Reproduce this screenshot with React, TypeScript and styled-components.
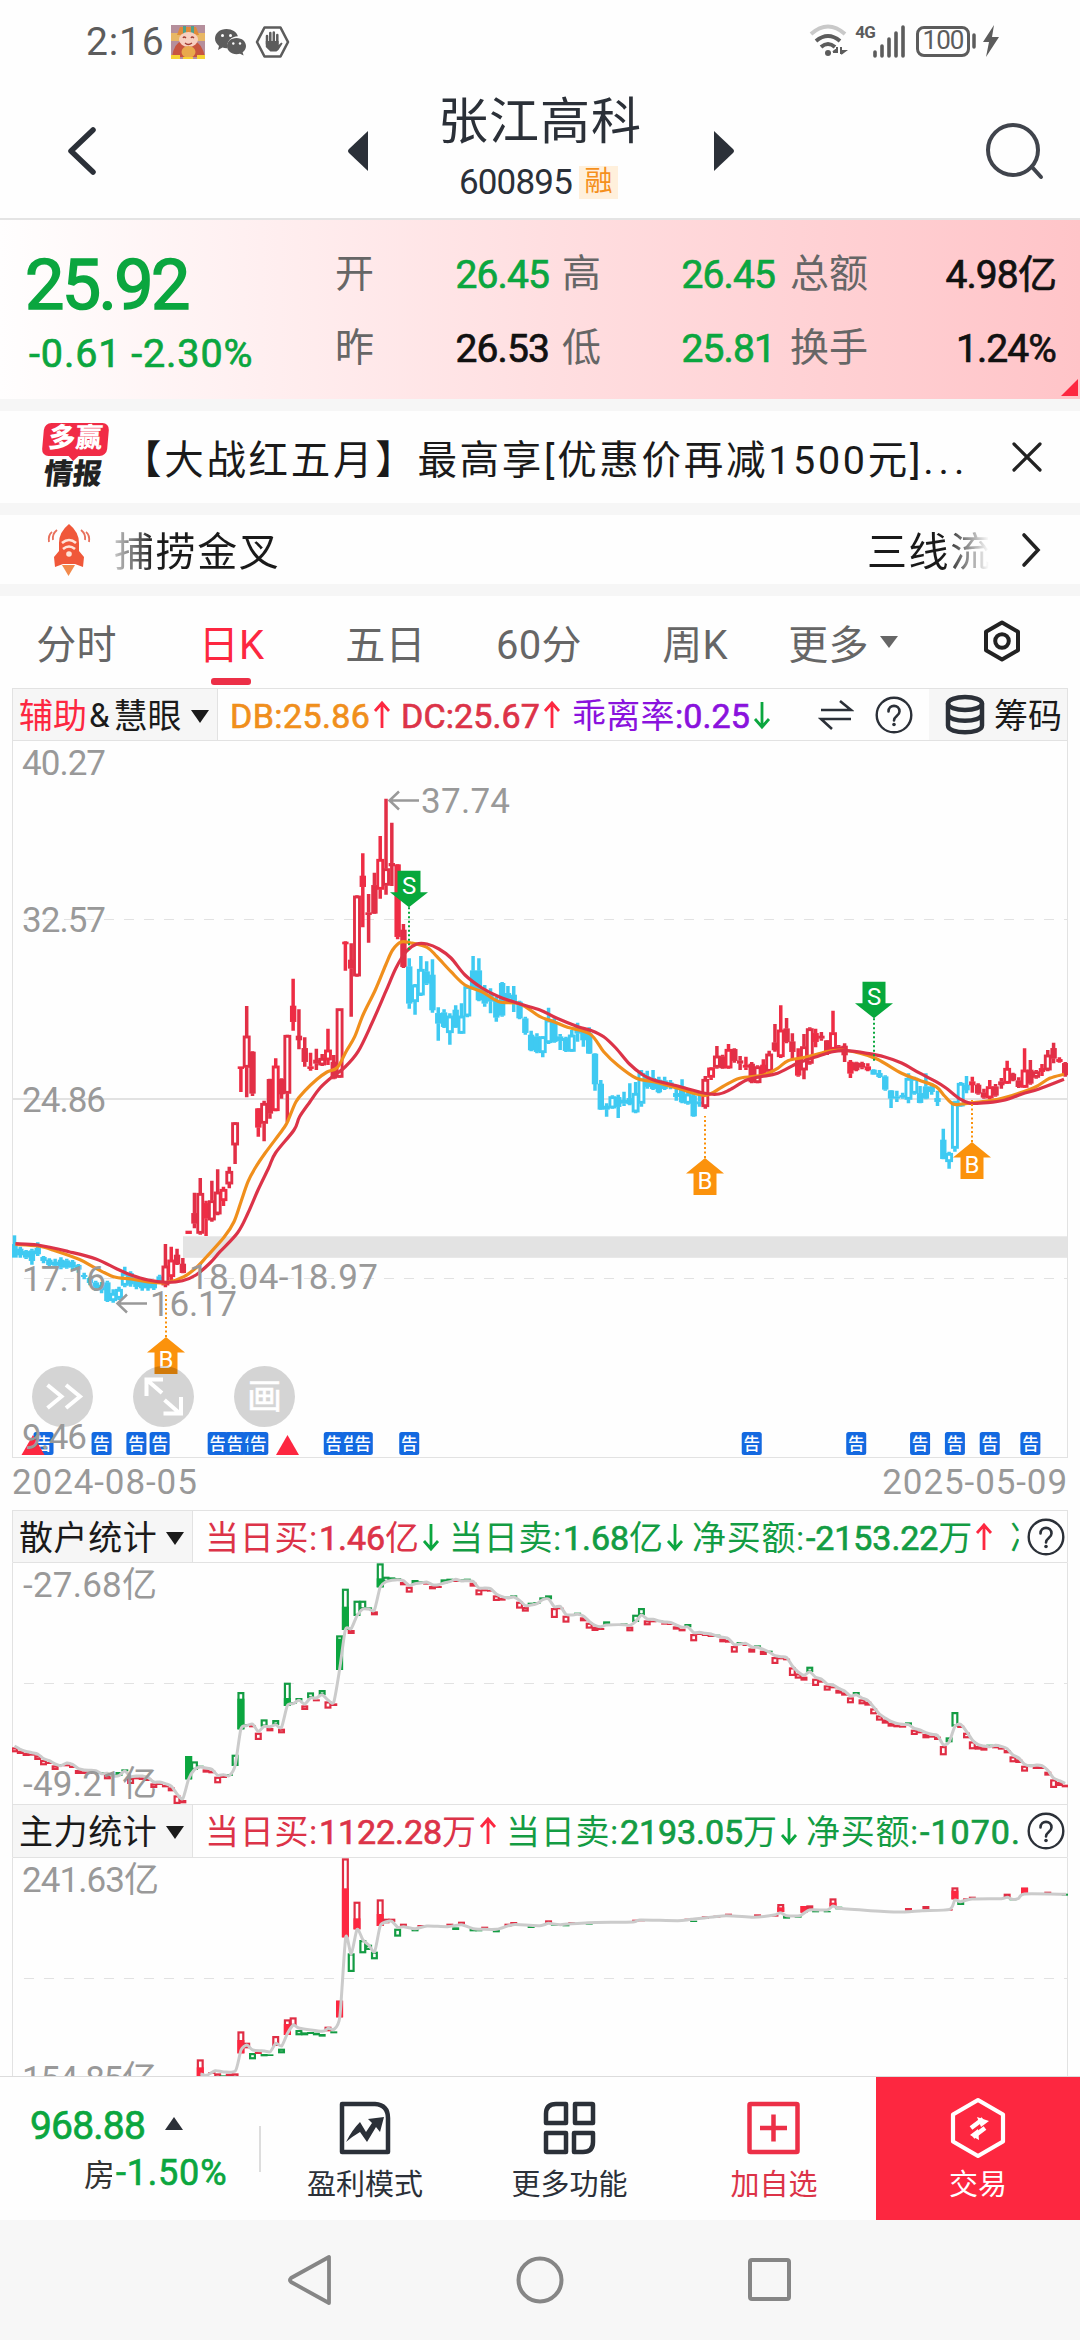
import React from 'react';
import styled, { createGlobalStyle } from 'styled-components';

const RED = '#fd2740';
const DEEP = '#dc3348';
const GREEN = '#0ba63f';
const BLUE = '#3fcaf2';
const ORANGE = '#f08f1c';
const INK = '#2b3038';
const GREY = '#666';
const LABEL = '#999';
const LINE = '#e2e2e2';

const FONT = "Roboto, 'Noto Sans CJK SC', sans-serif";

const Global = createGlobalStyle`
  * { box-sizing: border-box; }
  body { margin: 0; background: #fff; font-family: ${FONT}; color: #1a1a1a; }
`;

const Screen = styled.div`
  width: 1080px;
  height: 2340px;
  display: flex;
  flex-direction: column;
  background: #fefefe;
  overflow: hidden;
`;

interface TxtProps { $size: number; $color?: string; $ls?: number; $bold?: boolean; $ml?: number; $ws?: number; $pt?: number }
const Txt = styled.span<TxtProps>`
  font-size: ${(p) => p.$size}px;
  line-height: 1.2;
  color: ${(p) => p.$color ?? 'inherit'};
  letter-spacing: ${(p) => p.$ls ?? 0}px;
  word-spacing: ${(p) => p.$ws ?? 0}px;
  -webkit-text-stroke: ${(p) => (p.$bold ? `${p.$size > 60 ? 1.6 : 0.7}px currentColor` : '0')};
  margin-left: ${(p) => p.$ml ?? 0}px;
  padding-top: ${(p) => p.$pt ?? 0}px;
  white-space: pre;
`;

/* ---------- status bar ---------- */

const StatusBar = styled.div`
  height: 82px;
  display: flex;
  align-items: center;
  justify-content: space-between;
  padding: 0 78px 0 86px;
  color: #5c5c5c;
`;
const StatusGroup = styled.div`
  display: flex;
  align-items: center;
`;

function LeftStatus() {
  return (
    <StatusGroup>
      <Txt $size={39} $ls={0.8} $pt={2}>2:16</Txt>
      <svg width="126" height="40" viewBox="168 20 126 40" style={{ display: 'block', marginLeft: 3 }}>
        <rect x="172" y="24" width="34" height="34" fill="#b58f9c" />
        <path d="M172 32h34v8h-34z" fill="#e8b765" />
        <path d="M178 34l3-8h16l3 8z" fill="#e08a3a" />
        <path d="M184 25h3v8h-3zM192 25h3v8h-3z" fill="#4fa08c" />
        <path d="M173 56q2-14 10-16h12q8 2 11 16z" fill="#c8543f" />
        <ellipse cx="189.500" cy="38.500" rx="9.500" ry="7.500" fill="#f7cfc0" />
        <path d="M184 37q1-2 3 0M192 37q1-2 3 0M186 42q3 3 7 0" stroke="#a33c33" strokeWidth="1.300" fill="none" />
        <ellipse cx="189.500" cy="51" rx="7" ry="6" fill="#e9a94c" />
        <path d="M172 54h9v4h-9zM198 54h8v4h-8zM184 56h10v2h-10z" fill="#f6d335" />
        <path d="M227.500 28c-6.600 0-11.500 4.200-11.500 9.600 0 3 1.500 5.500 4 7.300l-1 4 4.500-2.300c1.300.4 2.600.6 4 .6h1c-1.600-7 4-11.800 10.400-12-1.200-4.300-5.800-7.200-11.400-7.200z" fill="#5c5c5c" />
        <path d="M237.500 37c-5.500 0-9.500 3.600-9.500 8s4 8.200 9.500 8.200c1.200 0 2.400-.2 3.500-.5l3.600 1.800-1-3.200c2.200-1.500 3.400-3.700 3.400-6.300 0-4.400-4-8-9.500-8z" fill="#5c5c5c" />
        <g fill="#fff"><circle cx="223.500" cy="34.500" r="1.500" /><circle cx="231.500" cy="34.500" r="1.500" /><circle cx="234.300" cy="42.500" r="1.200" /><circle cx="241" cy="42.500" r="1.200" /></g>
        <path d="M265.500 26.500h16l7.500 14.500-7.500 14.500h-16L258 41z" fill="none" stroke="#5c5c5c" strokeWidth="2.600" strokeLinejoin="round" />
        <path d="M268 43V35M271.300 42V32M274.800 42V31.500M278.300 43V34" stroke="#5c5c5c" strokeWidth="2.500" strokeLinecap="round" />
        <path d="M266.800 40h12.800v4l2.700-2.600 1.300 1-4.200 6.600-2 1.500h-6l-4.600-4.500z" fill="#5c5c5c" />
      </svg>
    </StatusGroup>
  );
}

const Battery = styled.div`
  width: 54px;
  height: 31px;
  margin-left: 10px;
  border: 3px solid #5c5c5c;
  border-radius: 8px;
  display: flex;
  align-items: center;
  justify-content: center;
`;
const Network = styled.div`
  align-self: flex-start;
  margin: 0 0 0 6px;
  font: 700 17px/18px ${FONT};
  letter-spacing: -0.8px;
`;

function RightStatus() {
  return (
    <StatusGroup>
      <svg width="40" height="34" viewBox="0 0 40 34">
        <path d="M2 10q17-15 34 0" fill="none" stroke="#c9c9c9" strokeWidth="4" />
        <path d="M7 17q12-10 24 0M12 23q7-6 14 0" fill="none" stroke="#5c5c5c" strokeWidth="4" />
        <circle cx="19" cy="29" r="3" fill="#5c5c5c" />
        <path d="M24 28h4v-5M24 28l4-3M32 23v7M32 30l4-3h-4" stroke="#5c5c5c" strokeWidth="2" fill="none" />
      </svg>
      <Network>4G</Network>
      <svg width="34" height="34" viewBox="0 0 34 34" style={{ marginLeft: -3 }}>
        <path d="M3 32v-4M10 32V22M17 32V15M24 32V9M31 32V3" stroke="#5c5c5c" strokeWidth="3.600" strokeLinecap="round" />
      </svg>
      <Battery><Txt $size={26} $ls={-1}>100</Txt></Battery>
      <svg width="32" height="36" viewBox="0 0 32 36">
        <path d="M4 12v12" stroke="#5c5c5c" strokeWidth="3.500" strokeLinecap="round" />
        <path d="M24 2L13 19h6l-3 15 13-20h-7z" fill="#5c5c5c" />
      </svg>
    </StatusGroup>
  );
}

/* ---------- title ---------- */

const TitleBar = styled.div`
  height: 138px;
  border-bottom: 2px solid #e4e4e4;
  display: grid;
  grid-template-columns: 340px 1fr 340px;
  align-items: center;
`;
const TitleSide = styled.div<{ $right?: boolean }>`
  display: flex;
  align-items: center;
  justify-content: space-between;
  padding: ${(p) => (p.$right ? '2px 34px 0 0' : '2px 0 0 60px')};
  margin: ${(p) => (p.$right ? '0 0 0 -29px' : '0 -31px 0 0')};
`;
const TitleMid = styled.div`
  display: flex;
  flex-direction: column;
  align-items: center;
  color: ${INK};
  margin-top: -5px;
`;
const CodeRow = styled.div`
  display: flex;
  align-items: center;
  gap: 7px;
  margin-top: 10px;
  padding-right: 3px;
`;
const Margin = styled.span`
  width: 39px;
  height: 33px;
  background: #fff0dc;
  color: #f5901c;
  font-size: 28px;
  line-height: 32px;
  text-align: center;
`;

function Title() {
  return (
    <TitleBar>
      <TitleSide>
        <svg width="40" height="56" viewBox="0 0 40 56"><path d="M33 7L11 28l22 21" fill="none" stroke={INK} strokeWidth="5.500" strokeLinecap="round" strokeLinejoin="round" /></svg>
        <svg width="24" height="44" viewBox="0 0 24 44"><path d="M21 2v40L2 24q-2-2 0-4z" fill={INK} /></svg>
      </TitleSide>
      <TitleMid>
        <Txt $size={50} $ls={1}>张江高科</Txt>
        <CodeRow>
          <Txt $size={35} $ls={-0.8}>600895</Txt>
          <Margin>融</Margin>
        </CodeRow>
      </TitleMid>
      <TitleSide $right>
        <svg width="24" height="44" viewBox="0 0 24 44"><path d="M3 2v40l19-18q2-2 0-4z" fill={INK} /></svg>
        <svg width="62" height="62" viewBox="0 0 62 62"><circle cx="29" cy="30" r="25" fill="none" stroke="#40444c" strokeWidth="4" /><path d="M48 47l9 10" stroke="#40444c" strokeWidth="4" strokeLinecap="round" /></svg>
      </TitleSide>
    </TitleBar>
  );
}

/* ---------- quote ---------- */

const Quote = styled.section`
  position: relative;
  height: 179px;
  padding: 23px 24px 0 24px;
  display: flex;
  background: linear-gradient(90deg, #fffefe 0%, #ffdfe1 50%, #ffc4c8 100%);
  &::after {
    content: '';
    position: absolute;
    right: 2px;
    bottom: 3px;
    border-left: 17px solid transparent;
    border-bottom: 17px solid ${RED};
  }
`;
const PriceCol = styled.div`
  width: 311px;
  display: flex;
  flex-direction: column;
  gap: 3px;
  color: ${GREEN};
`;
const Grid = styled.div`
  flex: 1;
  display: grid;
  grid-template-columns: 39px 175px 13px 39px 174px 13px 80px 1fr;
  grid-template-rows: 74px 74px;
  margin-top: -5px;
  align-items: center;
`;
const Cell = styled.div<{ $color?: string; $start: number }>`
  grid-column-start: ${(p) => p.$start};
  text-align: right;
  white-space: nowrap;
  font-size: 39px;
  line-height: 58px;
  margin-top: ${(p) => (p.$color ? 0 : -2)}px;
  -webkit-text-stroke: ${(p) => (p.$color ? '0.7px currentColor' : '0')};
  letter-spacing: ${(p) => (p.$color ? -0.9 : 0)}px;
  color: ${(p) => p.$color ?? GREY};
`;

function QuotePanel() {
  return (
    <Quote>
      <PriceCol>
        <Txt $size={70} $bold $ls={-2.6} $ml={1}>25.92</Txt>
        <Txt $size={39.5} $bold $ls={0.9} $ws={-1} $ml={5}>-0.61 -2.30%</Txt>
      </PriceCol>
      <Grid>
        <Cell $start={1}>开</Cell><Cell $start={2} $color={GREEN}>26.45</Cell>
        <Cell $start={4}>高</Cell><Cell $start={5} $color={GREEN}>26.45</Cell>
        <Cell $start={7}>总额</Cell><Cell $start={8} $color="#111">4.98亿</Cell>
        <Cell $start={1}>昨</Cell><Cell $start={2} $color="#111">26.53</Cell>
        <Cell $start={4}>低</Cell><Cell $start={5} $color={GREEN}>25.81</Cell>
        <Cell $start={7}>换手</Cell><Cell $start={8} $color="#111">1.24%</Cell>
      </Grid>
    </Quote>
  );
}

/* ---------- notices ---------- */

const Gap = styled.div`
  height: 12px;
  flex: none;
  background: #f6f6f6;
`;
const Notice = styled.div<{ $h: number }>`
  height: ${(p) => p.$h}px;
  display: flex;
  align-items: center;
  padding: 0 36px 0 40px;
`;
const Logo = styled.div`
  width: 70px;
  margin-top: -2px;
  display: flex;
  flex-direction: column;
  align-items: center;
`;
const Bubble = styled.div`
  position: relative;
  width: 65px;
  height: 33px;
  border-radius: 7px;
  background: #f12b46;
  color: #fff;
  font: 900 27px/31px ${FONT};
  text-align: center;
  transform: skewX(-5deg);
  &::after {
    content: '';
    position: absolute;
    left: 26px;
    top: 32px;
    border: 6px solid transparent;
    border-top-color: #f12b46;
    border-bottom: 0;
  }
`;
const LogoText = styled.div`
  margin: 3px 4px 0 0;
  font: 900 29px/30px ${FONT};
  color: #222;
  transform: skewX(-7deg);
`;
const Clip = styled.div<{ $w: number; $fade?: string }>`
  width: ${(p) => p.$w}px;
  overflow: hidden;
  white-space: nowrap;
  ${(p) => p.$fade && `-webkit-mask-image: ${p.$fade}; mask-image: ${p.$fade}; padding-top: 6px;`}
`;
const Spacer = styled.div`flex: 1;`;

function Notices() {
  return (
    <>
      <Gap />
      <Notice $h={92}>
        <Logo><Bubble>多赢</Bubble><LogoText>情报</LogoText></Logo>
        <Txt $size={39.5} $ls={2.7} $ml={12} $pt={8}>【大战红五月】最高享[优惠价再减1500元]<Txt as="span" $size={39.5} $ls={5}>...</Txt></Txt>
        <Spacer />
        <svg width="34" height="34" viewBox="0 0 34 34"><path d="M4 4l26 26M30 4L4 30" stroke="#222" strokeWidth="3.200" strokeLinecap="round" /></svg>
      </Notice>
      <Gap />
      <Notice $h={69}>
        <svg width="56" height="56" viewBox="0 0 56 56">
          <path d="M12 10q-4 3-3 10M17 8q-5 4-4 10M46 10q4 3 3 10M41 8q5 4 4 10" fill="none" stroke="#e8705c" strokeWidth="1.800" />
          <path d="M29 2q10 8 10 19v8l5 6-1 10-8-3H23l-8 3-1-10 5-6v-8Q19 10 29 2z" fill="#f0583a" />
          <path d="M22 43h13l-6.500 11z" fill="#f28a4c" />
          <path d="M22 21q7-6 14 0M23 27q6-5 12 0" fill="none" stroke="#ffe3d8" strokeWidth="2.600" />
          <circle cx="29" cy="32" r="2.800" fill="#ffe3d8" />
        </svg>
        <Clip $w={186} $fade="linear-gradient(90deg, transparent 6px, #000 58px)">
          <Txt $size={40} $ls={1.6} $ml={18}>捕捞金叉</Txt>
        </Clip>
        <Spacer />
        <Clip $w={124} $fade="linear-gradient(90deg, #000 78px, transparent 122px)">
          <Txt $size={40} $ls={1.6}>三线流</Txt>
        </Clip>
        <svg width="24" height="40" viewBox="0 0 24 40" style={{ marginLeft: 29 }}><path d="M4 5l14 15L4 35" fill="none" stroke="#222" strokeWidth="3.600" strokeLinecap="round" /></svg>
      </Notice>
      <Gap />
    </>
  );
}

/* ---------- period tabs ---------- */

const Tabs = styled.div`
  height: 92px;
  display: grid;
  grid-template-columns: 153px 157px 151px 156px 156px 150px 1fr;
  align-items: center;
`;
const Tab = styled.div<{ $active?: boolean }>`
  height: 92px;
  padding-bottom: 1px;
  display: flex;
  align-items: center;
  justify-content: center;
  gap: 11px;
  position: relative;
  font-size: 40px;
  white-space: nowrap;
  letter-spacing: 0.3px;
  color: ${(p) => (p.$active ? RED : GREY)};
  &::after {
    content: '';
    display: ${(p) => (p.$active ? 'block' : 'none')};
    position: absolute;
    left: 58px;
    bottom: 3px;
    width: 40px;
    height: 7px;
    border-radius: 3px;
    background: #ec2f47;
  }
`;
const Caret = styled.i<{ $color: string; $ml?: number; $up?: boolean; $h?: number }>`
  flex: none;
  width: 0;
  height: 0;
  margin-left: ${(p) => p.$ml ?? 0}px;
  border: 9px solid transparent;
  border-top: ${(p) => (p.$up ? '0' : `${p.$h ?? 13}px solid ${p.$color}`)};
  border-bottom: ${(p) => (p.$up ? `${p.$h ?? 13}px solid ${p.$color}` : '0')};
`;

function PeriodTabs() {
  return (
    <Tabs>
      <Tab>分时</Tab>
      <Tab $active>日K</Tab>
      <Tab>五日</Tab>
      <Tab>60分</Tab>
      <Tab>周K</Tab>
      <Tab style={{ paddingRight: 10 }}>更多<Caret $color={GREY} $h={12} /></Tab>
      <Tab>
        <svg width="46" height="46" viewBox="0 0 46 46" style={{ marginTop: -2, marginLeft: 1 }}>
          <path d="M23 4.500l16 9.200v18.600l-16 9.200-16-9.200V13.700z" fill="none" stroke="#222" strokeWidth="4" strokeLinejoin="round" />
          <circle cx="23" cy="23" r="6.800" fill="none" stroke="#222" strokeWidth="4" />
        </svg>
      </Tab>
    </Tabs>
  );
}

/* ---------- indicator headers ---------- */

const Charts = styled.div`
  width: 1056px;
  margin-left: 12px;
  height: 1388px;
  overflow: hidden;
`;
const IndHead = styled.div<{ $h: number }>`
  height: ${(p) => p.$h}px;
  border: 1px solid ${LINE};
  border-width: 1px 1px 0 1px;
  display: flex;
  align-items: stretch;
`;
const Picker = styled.div<{ $w: number }>`
  width: ${(p) => p.$w}px;
  background: #f6f6f6;
  border-right: 1px solid ${LINE};
  padding: 3px 0 0 6px;
  display: flex;
  align-items: center;
  flex: none;
`;
const Values = styled.div<{ $w: number; $pl: number }>`
  width: ${(p) => p.$w}px;
  padding: 3px 0 0 ${(p) => p.$pl}px;
  display: flex;
  align-items: center;
  overflow: hidden;
  flex: none;
`;
const Value = styled.div<{ $w: number; $color: string }>`
  width: ${(p) => p.$w}px;
  flex: none;
  display: flex;
  align-items: center;
  color: ${(p) => p.$color};
`;
const ArrowSvg = styled.svg`
  flex: none;
  margin: -2px 0 0 3px;
`;
const HeadTail = styled.div<{ $pl?: number }>`
  flex: 1;
  display: flex;
  align-items: center;
  padding-left: ${(p) => p.$pl ?? 0}px;
`;
const Chips = styled.div`
  width: 138px;
  height: 51px;
  background: #f6f6f6;
  display: flex;
  align-items: center;
  padding-left: 15px;
`;

function Arrow({ up, color }: { up?: boolean; color: string }) {
  return (
    <ArrowSvg width="18" height="30" viewBox="0 0 18 30">
      <path d={up ? 'M9 28V4M2 11l7-8 7 8' : 'M9 2v24M2 19l7 8 7-8'} fill="none" stroke={color} strokeWidth="2.800" />
    </ArrowSvg>
  );
}

const HelpIcon = () => (
  <svg width="38" height="38" viewBox="0 0 38 38" style={{ flex: 'none' }}>
    <circle cx="19" cy="19" r="17.300" fill="none" stroke={INK} strokeWidth="2.400" />
    <path d="M13.500 15.500c0-7.500 11-7.500 11 0 0 4.500-5.500 4.500-5.500 9" fill="none" stroke={INK} strokeWidth="2.600" strokeLinecap="round" />
    <circle cx="19" cy="28.500" r="1.800" fill={INK} />
  </svg>
);

function Stat({ w, color, label, num, unit, up, dirColor }: { w: number; color: string; label: string; num: string; unit: string; up?: boolean; dirColor: string }) {
  return (
    <Value $w={w} $color={color}>
      <Txt $size={34} $ls={0.7}>{label}</Txt>
      <Txt $size={34} $bold $ls={-0.1} $ml={1}>{num}</Txt>
      <Txt $size={34}>{unit}</Txt>
      <Arrow up={up} color={dirColor} />
    </Value>
  );
}

/* ---------- chart geometry ---------- */

const STEP = 5.805;
const xAt = (i: number) => 14.5 + STEP * i;

// [high, body top, body bottom, low] in thirds of a pixel; a fifth value of 1 marks a hollow body
type Candle = number[];
const LOW_RUN: Candle[] = [
  [316,343,382,382],[350,357,375,383],[360,364,382,387],[356,362,392,404],[337,355,372,378],[378,382,392,400],[385,390,404,408],[386,396,406,412],[382,390,412,418],[386,392,412,416],
  [390,396,412,422],[402,406,418,428],[428,436,440,448],[440,445,458,466],[452,458,474,482],[456,465,480,490],[452,458,512,516],[478,490,512,518,1],[470,478,505,510,1],[410,430,466,472,1],
  [424,430,462,470],[445,450,470,478],[450,456,474,482],[452,458,474,482],[452,458,474,480],[434,440,452,460],[342,408,465,472,1],[350,390,440,455,1],[356,375,402,405],[384,402,428,430],
  [303,303,311,311],[188,250,280,295],[144,190,310,314,1],[212,220,265,318],[152,212,270,275,1],[118,186,252,256,1],[170,178,212,228,1],[110,124,162,175,1],[-24,-22,45,102,1],
];
const HIGH_RUN: Candle[] = [
  [980,980,986,1056],[798,888,982,1072,1],[934,936,1060,1068],[1104,1106,1162,1190],[1082,1090,1150,1204,1],[1016,1018,1120,1136],[955,978,1112,1114,1],[1015,1018,1062,1076],[884,886,1060,1146,1],[716,798,845,872],
  [808,888,900,928],[892,925,965,980],[938,980,986,992],[926,960,970,990],[942,955,975,978,1],[866,930,960,975,1],[945,966,1015,1018],[806,806,1012,1014,1],[604,606,612,692],[610,660,685,830],
  [466,468,708,710,1],[340,408,440,562],[462,518,524,608],[398,436,520,522],[288,358,448,476,1],[176,386,436,464,1],[248,370,378,438],[372,374,590,598],[552,570,680,684],
  [655,680,790,806],[732,735,785,824,1],[648,688,765,768,1],[664,695,730,735],[658,705,810,818],[802,820,850,902],[808,818,860,864],[820,828,878,914,1],[796,810,862,864],[790,828,880,882,1],
  [738,740,828,832,1],[648,692,745,750],[655,692,780,784],[735,750,790,800],[745,762,784,820],[770,780,832,845],[726,730,826,830],[738,760,775,780],[738,765,790,816],[782,786,834,838],
  [830,836,878,884],[872,885,930,934],[880,890,935,940],[888,890,938,952,1],[803,840,908,912,1],[835,845,905,908],[882,890,902,930],[890,895,932,936],[870,885,934,936,1],[848,862,880,905],
  [862,870,900,920],[862,880,940,942],[940,942,1032,1052],[1020,1032,1108,1110],[1090,1098,1108,1130],[1066,1070,1104,1106,1],[1064,1072,1100,1134],[1055,1080,1090,1098],[1030,1075,1092,1096],[1026,1060,1116,1120,1],
  [990,1000,1090,1100,1],[992,1010,1040,1046],[990,1015,1046,1050],[1010,1020,1056,1060],[1010,1022,1046,1050],[1020,1028,1040,1048],[1040,1060,1070,1082],[1018,1040,1086,1090],[1050,1062,1090,1094,1],[1060,1068,1128,1130],
  [1068,1085,1092,1100],[1008,1018,1100,1106,1],[982,984,1012,1020,1],[918,948,982,986,1],[944,950,984,986],[912,928,984,986,1],[925,928,962,968],[948,962,970,990],[950,975,982,990],[966,972,1026,1030],
  [976,980,1028,1030,1],[958,975,1008,1010],[932,942,994,998,1],[852,908,930,935],[796,870,950,954,1],[834,866,905,910],[880,905,935,958],[925,955,1006,1010],[882,920,990,1018,1],[862,866,970,974,1],
  [866,880,905,922],[876,888,895,902],[900,902,940,945],[812,878,928,935,1],[915,920,928,932],[910,918,945,966],[960,966,1000,1014],[965,968,990,994],[965,970,982,988],[970,980,990,994],
  [988,990,1003,1004],[990,1000,1010,1014],[1006,1010,1048,1052],[1050,1052,1075,1104],[1052,1070,1075,1086],[1058,1066,1072,1076],[1000,1015,1078,1090,1],[1010,1015,1060,1064,1],[1038,1060,1088,1090],[1000,1040,1075,1078],
  [1030,1040,1055,1064],[1052,1075,1085,1098],[1166,1200,1256,1258],[1235,1240,1265,1286,1],[1082,1085,1225,1235,1],[1026,1030,1098,1100,1],[1008,1035,1050,1060],[1010,1025,1035,1058],[1030,1035,1060,1064],[1046,1058,1072,1076],
  [1020,1040,1074,1078,1],[1032,1040,1066,1070],[1014,1025,1035,1046],[962,985,1030,1032,1],[998,1002,1020,1024],[1012,1022,1040,1044],[925,990,1042,1044,1],[960,990,1030,1034],[990,995,1012,1016,1],[972,985,995,1008],
  [930,945,990,994,1],[908,925,955,970],[952,958,965,968],[966,970,1005,1010],
];
const CANDLES: Candle[] = [
  ...LOW_RUN.map(([h, t, b, l, o]) => [h + 1170, t + 1170, b + 1170, l + 1170, o ?? 0]),
  ...HIGH_RUN,
];
const isBlue = (i: number) => i < 26 || (i >= 68 && i < 119) || (i >= 148 && i < 165);

type Pt = [number, number];
const SLOW: Pt[] = [[15.5,1243.7],[38,1245],[69,1251.7],[96,1259],[117,1269],[131,1275],[148,1280],[166,1282.3],[182.5,1280.7],[196,1275],[210,1263],[220,1251.7],[237.6,1232.7],[248,1213],[258,1190],[268.6,1168],[275.5,1153],[294,1130],[299.6,1116.7],[310,1101.7],[320,1088],[332,1077],[344,1068],[358,1051.7],[372,1023],[385.7,991.7],[396,968],[406,951.7],[416.7,944],[427,944],[439,949],[451,958],[465,975],[482,988],[499,996.7],[520,1004],[540,1010],[557,1018.3],[578,1026.7],[591.7,1030.7],[603.7,1036.7],[615.8,1048],[629.5,1064],[643,1075],[653.6,1080],[677.7,1086],[705,1093.3],[719,1094],[729.4,1090],[746.6,1080],[760.4,1076.7],[777.6,1073.3],[798,1063],[815.5,1057],[832.7,1051.7],[846.5,1050.7],[867,1053.3],[884,1056.7],[901.6,1063],[918.8,1072.7],[936,1081.7],[946,1088],[960,1099],[970.4,1103.3],[987.7,1102.7],[1005,1100],[1022,1094],[1039,1089],[1064,1079.3]];
const FAST: Pt[] = [[15.5,1244.3],[38,1246],[55,1250.7],[79,1259.3],[96,1268.3],[113.6,1276.7],[131,1279],[148,1282],[166,1282.7],[184,1276.7],[198,1266],[206.6,1256.7],[224,1237.3],[234,1221.7],[241,1201.7],[248,1181.7],[255,1168.3],[265,1153.3],[282.4,1130],[287.5,1121.7],[296,1101.7],[305,1090.7],[317,1079.3],[327,1072],[337.5,1067.3],[346,1051.7],[354.7,1036.7],[363,1015],[375.3,990],[385.7,965],[392.6,950],[401,942],[410,942.7],[427,947.3],[437,956.7],[451,971.7],[465,985],[482,991.7],[499,1001.7],[520,1004],[540,1016.7],[553.8,1021.7],[567.5,1027.3],[590,1034],[603.7,1051.7],[617.5,1065],[636.4,1078.3],[653.6,1081.7],[677.7,1088.3],[705,1095.3],[722.5,1086.7],[739.7,1078.3],[763.8,1075],[777.6,1068.3],[788,1060.7],[805,1057.3],[822.4,1052.7],[839.6,1050],[860,1053.3],[877.5,1059.3],[901.6,1073.3],[918.8,1080],[936,1086.7],[944.6,1096],[953,1104],[961.8,1104],[974,1102.7],[998,1099.3],[1018.7,1093.3],[1035.9,1086.7],[1049.6,1078.3],[1064,1074.3]];

function smooth(pts: Pt[], k = 6) {
  let d = `M${pts[0][0]} ${pts[0][1]}`;
  for (let i = 0; i < pts.length - 1; i++) {
    const p0 = pts[i - 1] ?? pts[i];
    const p1 = pts[i];
    const p2 = pts[i + 1];
    const p3 = pts[i + 2] ?? p2;
    d += `C${p1[0] + (p2[0] - p0[0]) / k} ${p1[1] + (p2[1] - p0[1]) / k} ${p2[0] - (p3[0] - p1[0]) / k} ${p2[1] - (p3[1] - p1[1]) / k} ${p2[0]} ${p2[1]}`;
  }
  return d;
}

const ChartSvg = styled.svg`
  display: block;
  text { font-family: ${FONT}; }
  .axis { font-size: 35px; fill: ${LABEL}; }
`;

const Dashed = ({ y }: { y: number }) => (
  <line x1="24" x2="1067" y1={y} y2={y} stroke={LINE} strokeWidth="1.200" strokeDasharray="10 10" />
);
const Axis = ({ x, y, w, children }: { x: number; y: number; w: number; children: string }) => (
  <text className="axis" x={x} y={y} textLength={w}>{children}</text>
);

function Signal({ x, y, to, kind }: { x: number; y: number; to: number; kind: 'B' | 'S' }) {
  const s = kind === 'S';
  const c = s ? '#07a83c' : '#fb920c';
  const d = s
    ? `M${x - 11.5} ${y - 36.5}h23v21.500h7.500L${x} ${y}l-19-15h7.500z`
    : `M${x - 11.5} ${y + 37}h23v-21.500h7.500L${x} ${y}l-19 15.500h7.500z`;
  return (
    <g>
      <line x1={x} x2={x} y1={y} y2={to} stroke={c} strokeWidth="2" strokeDasharray="2 2.500" />
      <path d={d} fill={c} />
      <text x={x} y={s ? y - 13 : y + 30.5} fontSize="24" textAnchor="middle" fill="#fff">{kind}</text>
    </g>
  );
}

const NEWS = [5, 15, 21, 25, 35, 38, 41, 42, 55, 58, 60, 68, 127, 145, 156, 162, 168, 175];

function KChart() {
  return (
    <ChartSvg width="1056" height="718" viewBox="12 740 1056 718">
      <rect x="12.500" y="740.500" width="1055" height="717" fill="none" stroke={LINE} />
      <Dashed y={919.5} />
      <line x1="12" x2="1067" y1="1099" y2="1099" stroke={LINE} strokeWidth="2" />
      <Dashed y={1278.5} />
      <rect x="183" y="1236.300" width="884" height="21.500" fill="#e3e3e3" />
      {CANDLES.map(([h, t, b, l, o], i) => {
        const x = xAt(i);
        const c = isBlue(i) ? BLUE : i % 3 ? '#e22f46' : '#ee2c44';
        const y = (v: number) => 740 + v / 3;
        return (
          <g key={i} stroke={c} strokeWidth="3.500">
            <path d={`M${x} ${y(h)}V${y(t)}M${x} ${y(b)}V${y(l)}`} />
            {o ? <rect x={x - 2.5} y={y(t) + 1} width="5" height={Math.max(1, y(b) - y(t) - 2)} fill="#fff" strokeWidth="2.900" />
              : <rect x={x - 3.2} y={y(t) - 0.3} width="6.400" height={y(b) - y(t) + 0.6} fill={c} stroke="none" />}
          </g>
        );
      })}
      <path d={smooth(FAST)} fill="none" stroke={ORANGE} strokeWidth="3.200" />
      <path d={smooth(SLOW)} fill="none" stroke={DEEP} strokeWidth="3.200" />
      <Signal kind="S" x={409} y={907.3} to={950} />
      <Signal kind="S" x={874} y={1018.3} to={1061} />
      <Signal kind="B" x={166} y={1337} to={1295} />
      <Signal kind="B" x={705} y={1158} to={1116} />
      <Signal kind="B" x={972} y={1142} to={1100} />
      {[62.5, 163.5, 264.5].map((x) => <circle key={x} cx={x} cy="1396.500" r="30.500" fill="#000" fillOpacity="0.165" />)}
      <g fill="none" stroke="#fff" strokeWidth="4">
        <path d="M47.500 1385l14 11.500-14 11.500M66 1385l14 11.500-14 11.500" />
        <path d="M146.500 1396v-16.500H163M147 1380l15 13M164.500 1400l16 14M181 1397v16.500h-17.500" />
      </g>
      <text x="264.500" y="1409" fontSize="35" fill="#fff" stroke="#fff" strokeWidth="0.600" textAnchor="middle">画</text>
      {NEWS.map((n) => (
        <g key={n}>
          <rect x={xAt(n) - 10} y="1432" width="20" height="23" rx="2.500" fill="#1469e0" />
          <text x={xAt(n)} y="1449.500" fontSize="16.500" fontWeight="500" fill="#fff" textAnchor="middle">告</text>
        </g>
      ))}
      <path d="M287.500 1435l-11.500 20h23z" fill={RED} />
      <path d="M33 1435l-11.500 20h23z" fill={RED} />
      <g fill="none" stroke={LABEL} strokeWidth="2.500">
        <path d="M419 800.500H390M399 791.500l-9.500 9 9.500 9" />
        <path d="M147 1303.500h-29M127 1294.500l-9.500 9 9.500 9" />
      </g>
      <Axis x={22} y={774.5} w={84}>40.27</Axis>
      <Axis x={22} y={931.8} w={84}>32.57</Axis>
      <Axis x={22} y={1111.8} w={84}>24.86</Axis>
      <Axis x={22} y={1291} w={84}>17.16</Axis>
      <Axis x={22} y={1449} w={65}>9.46</Axis>
      <Axis x={421} y={812.8} w={89}>37.74</Axis>
      <Axis x={150} y={1316} w={87}>16.17</Axis>
      <Axis x={189} y={1289} w={189}>18.04-18.97</Axis>
    </ChartSvg>
  );
}

// [index, top, bottom, 1 = red / 0 = green, solid-from]
const RETAIL: number[][] = [
  [0,742,757,1],[1,752,762,1],[2,758,768,1],[3,762,767,1],[4,766,780,1],[5,780,796,1],[6,786,792,1],[7,796,810,1],[8,793,798,0],[9,793,799,1],[10,797,804,1],[11,810,822,1],[12,814,822,1],[13,815,822,1],[14,816,822,1],[15,816,822,0],[16,824,838,1],[17,824,829,0],[18,816,828,0],[19,808,814,0],[20,834,852,1],[21,832,838,1],[22,832,840,1],[23,836,843,1],[24,850,864,1],[25,850,855,1],[26,855,862,1],[27,862,874,1],[28,886,912,1],[29,900,910,1],
  [30,768,838,0,768],[31,784,810,0],[32,797,802,0],[33,808,818,1],[34,812,820,1],[35,830,850,1],[36,828,834,1],[37,822,828,0],[38,764,798,0],[39,576,688,0,596],[40,672,678,0],[41,676,682,1],[42,698,720,1],[43,658,680,0],[44,684,694,1],[45,660,675,0],[46,686,700,1],[47,548,618,0,594],[48,606,612,0],[49,594,602,0],[50,616,630,1],[51,577,595,0],[52,598,604,1],[53,570,585,0],[54,604,626,1],[55,610,618,1],[56,406,510,0,416],[57,266,390,0,320],[58,390,402,1],[59,302,348,0],[60,302,328,0],[61,322,328,0],[62,334,346,1],[63,190,262,0,235],[64,230,246,0],[65,232,242,0],[66,234,240,0],[67,246,256,1],[68,260,278,1],[69,240,252,0],[70,244,250,0],[71,250,254,1],[72,258,268,1],[73,258,264,1],[74,238,250,0],[75,236,246,0],[76,242,246,1],[77,238,244,0],[78,236,243,0],[79,248,260,1],[80,268,286,1],[81,268,274,1],[82,270,275,1],[83,286,303,1],[84,294,302,1],[85,290,295,0],[86,286,292,0],[87,305,326,1],[88,321,335,1],[89,308,316,0],[90,306,312,0],
  [91,292,300,0],[92,286,298,0],[93,324,354,1],[94,323,328,1],[95,347,368,1],[96,342,346,0],[97,338,344,0],[98,352,364,1],[99,368,386,1],[100,380,393,1],[101,384,390,1],[102,364,376,0],[105,370,375,0],[106,380,394,1],[107,344,366,0],[108,324,346,0],[109,361,376,1],[110,362,367,1],[111,360,364,0],[112,370,374,1],[113,371,375,1],[114,379,389,1],[115,386,394,1],[116,372,382,0],[117,402,424,1],[118,401,405,1],[119,404,408,1],[120,406,411,1],[121,404,409,0],[122,416,427,1],[123,420,428,1],[124,438,458,1],[125,426,433,0],[126,434,438,1],[127,445,458,1],[128,436,443,0],[129,452,465,1],[130,452,457,0],[131,471,492,1],[132,474,478,1],[133,476,481,1],[134,502,528,1],[135,520,536,1],[136,530,542,1],[137,500,516,0],[138,536,558,1],[139,541,548,1],[140,556,572,1],[141,559,565,1],[142,569,581,1],[143,577,587,1],[144,592,610,1],[145,576,585,0],[146,598,613,1],[147,605,617,1],[148,625,643,1],[149,646,662,1],[150,658,671,1],[151,668,680,1],[152,674,682,1],[153,677,683,1],[154,667,675,0],[155,689,705,1],[156,694,700,1],[157,702,715,1],[158,707,713,1],[159,710,720,1],[160,738,766,1],[161,712,727,0],[162,636,680,0],[163,677,684,1],[164,698,715,1],[165,724,748,1],[166,738,749,1],[167,742,752,1],[168,734,741,0],[169,740,745,1],[170,743,749,1],[171,750,760,1],[172,769,787,1],[173,778,789,1],[174,797,815,1],[175,794,799,0],[176,799,807,1],[177,801,807,1],[178,815,827,1],[179,838,864,1],[180,846,858,1],[181,854,862,1],
];
const RETAIL_LINE: Pt[] = RETAIL.map(([i, t, b, r]) => [xAt(i), 1500 + (r ? t - 4 : b - 1) / 3]);

const MAIN: number[][] = [
  [32,778,830,1,802],[34,816,822,1],[35,820,834,1],[36,826,830,0],[37,821,834,1],[38,820,834,1],[39,694,760,1,720],[40,728,745,1],[41,759,778,0],[42,755,762,1],[43,762,769,0],[44,763,768,0],[45,708,738,1],[46,746,760,0],[47,658,705,1,672],[48,652,678,1],[49,690,706,0],[50,697,706,0],[51,696,702,0],[52,698,706,0],[53,702,710,0],[54,680,694,1],[55,694,700,0],[56,602,652,1,602],[57,175,412,1,265],[58,460,516,0],[59,305,388,1,355],[60,420,460,0],[61,434,450,0],[62,455,478,0],[63,298,378,1,342],[64,356,370,1],[65,356,366,1],[66,386,410,0],[67,371,379,1],[69,385,394,0],[70,375,380,1],[75,371,377,1],[76,382,390,0],[77,365,374,1],[79,386,394,0],[80,388,394,0],[81,380,385,1],[83,389,397,0],[85,371,380,1],[86,366,374,1],[89,378,384,0],[92,361,371,1],[93,372,377,0],[95,374,379,0],[96,366,372,1],[99,369,374,0],[107,359,364,1],[108,358,364,1],[116,356,362,1],[117,362,366,0],[119,349,357,1],[121,347,353,1],[123,341,349,1],[128,343,351,1],[131,345,350,1],[132,312,336,1,322],[133,346,356,0],[135,348,353,0],[136,318,338,1,318],[137,316,328,1],[138,333,337,0],[140,333,337,0],[141,295,320,1,308],[142,320,328,0],[143,324,330,0],[154,324,332,1],[157,318,328,1],[161,327,332,1],[162,262,298,1,272],[163,306,315,0],[164,295,300,1],[165,290,297,1],[171,281,291,1],[172,296,301,0],[174,263,282,1,263],[178,275,281,1],[181,281,287,0],
];
const MAIN_LINE: Pt[] = ([
  [582,822],[600,826],[625,812],[650,816],[684,812],[700,750],[717,735],[734,750],[768,753],[785,755],[801,730],[818,738],[835,700],[852,675],[870,685],[936,694],[953,685],[970,688],[987,650],[1004,412],[1020,462],[1037,388],[1054,420],[1071,435],[1088,455],[1104,378],[1121,366],[1138,364],[1155,382],[1172,380],[1206,386],[1240,378],[1300,380],[1340,374],[1375,386],[1442,388],[1490,374],[1568,377],
  [1593,370],[1628,374],[1708,368],[1838,366],[1858,360],[1968,362],[2008,358],[2108,347],[2188,352],[2248,345],[2267,338],[2284,347],[2323,347],[2351,330],[2402,330],[2419,318],[2438,325],[2528,332],[2608,336],[2678,332],[2758,328],[2773,300],[2789,305],[2823,297],[2908,296],[2925,292],[2941,298],[2958,295],[2975,282],[3096,283],
] as Pt[]).map(([x, y]) => [x / 2.904, 1800 + y / 3]);

function Bars({ data, base }: { data: number[][]; base: number }) {
  return (
    <>
      {data.map(([i, t, b, r, s]) => {
        const c = r ? '#e02d44' : '#139c43';
        const y0 = base + t / 3;
        const h = (b - t) / 3;
        return (
          <g key={i}>
            {h < 4 ? <rect x={xAt(i) - 3.5} y={y0} width="7" height={h} fill={c} />
              : <rect x={xAt(i) - 2.4} y={y0 + 1.1} width="4.800" height={h - 2.2} fill="#fff" stroke={c} strokeWidth="2.200" />}
            {s !== undefined && <rect x={xAt(i) - 3.5} y={base + s / 3} width="7" height={(b - s) / 3} fill={r ? RED : GREEN} />}
          </g>
        );
      })}
    </>
  );
}

function RetailChart() {
  return (
    <ChartSvg width="1056" height="242" viewBox="12 1562 1056 242">
      <path d="M12.500 1804V1562.500h1055V1804" fill="none" stroke={LINE} />
      <Dashed y={1683.5} />
      <Bars data={RETAIL} base={1500} />
      <path d={smooth(RETAIL_LINE, 9)} fill="none" stroke="#cbcbcb" strokeWidth="3" />
      <Axis x={23} y={1596.8} w={134}>-27.68亿</Axis>
      <Axis x={23} y={1795.8} w={134}>-49.21亿</Axis>
    </ChartSvg>
  );
}
function MainChart() {
  return (
    <ChartSvg width="1056" height="219" viewBox="12 1857 1056 219">
      <path d="M12.500 2077V1857.500h1055V2077" fill="none" stroke={LINE} />
      <Dashed y={1978.5} />
      <Bars data={MAIN} base={1800} />
      <path d={smooth(MAIN_LINE, 9)} fill="none" stroke="#cbcbcb" strokeWidth="3" />
      <Axis x={22} y={1891.8} w={137}>241.63亿</Axis>
      <Axis x={22} y={2090.5} w={135}>154.85亿</Axis>
    </ChartSvg>
  );
}

const Dates = styled.div`
  height: 52px;
  display: flex;
  justify-content: space-between;
  align-items: center;
  padding-bottom: 2px;
`;

function ChartArea() {
  return (
    <Charts>
      <IndHead $h={52}>
        <Picker $w={205}>
          <Txt $size={34} $color={RED}>辅助</Txt><Txt $size={33} $ml={2}>&amp;</Txt><Txt $size={34} $ml={4}>慧眼</Txt>
          <Caret $color="#1a1a1a" $ml={9} />
        </Picker>
        <Values $w={590} $pl={12}>
          <Value $w={171} $color={ORANGE}><Txt $size={34} $bold $ls={0.4}>DB:25.86</Txt><Arrow up color={RED} /></Value>
          <Value $w={171} $color={DEEP}><Txt $size={34} $bold $ls={0.1}>DC:25.67</Txt><Arrow up color={RED} /></Value>
          <Value $w={200} $color="#8a12dd"><Txt $size={34} $ls={0.3}>乖离率</Txt><Txt $size={34} $bold $ls={0.1}>:0.25</Txt><Arrow color={GREEN} /></Value>
        </Values>
        <HeadTail>
          <svg width="36" height="34" viewBox="0 0 36 34" style={{ marginLeft: 10 }}><path d="M3 12h30L22 3M33 21H3l11 10" fill="none" stroke={INK} strokeWidth="2.600" /></svg>
          <Spacer />
          <HelpIcon />
          <div style={{ width: 16 }} />
          <Chips>
            <svg width="42" height="42" viewBox="0 0 42 42">
              <g fill="none" stroke={INK} strokeWidth="4.500"><ellipse cx="21" cy="9.500" rx="17" ry="6.500" /><path d="M4 9.500v22c0 9 34 9 34 0v-22M4 20c0 9 34 9 34 0" /></g>
            </svg>
            <Txt $size={34} $ml={8} $pt={3}>筹码</Txt>
          </Chips>
        </HeadTail>
      </IndHead>
      <KChart />
      <Dates>
        <Txt $size={35} $color={LABEL} $ls={0.9}>2024-08-05</Txt>
        <Txt $size={35} $color={LABEL} $ls={0.9}>2025-05-09</Txt>
      </Dates>
      <IndHead $h={52}>
        <Picker $w={180}><Txt $size={34} $ls={0.6}>散户统计</Txt><Caret $color="#1a1a1a" $ml={9} /></Picker>
        <Values $w={826} $pl={12}>
          <Stat w={244} color={DEEP} label="当日买:" num="1.46" unit="亿" dirColor={GREEN} />
          <Stat w={243} color="#139c43" label="当日卖:" num="1.68" unit="亿" dirColor={GREEN} />
          <Stat w={318} color="#139c43" label="净买额:" num="-2153.22" unit="万" up dirColor={RED} />
          <Txt $size={34} $color="#139c43">净</Txt>
        </Values>
        <HeadTail $pl={8}><HelpIcon /></HeadTail>
      </IndHead>
      <RetailChart />
      <IndHead $h={53}>
        <Picker $w={180}><Txt $size={34} $ls={0.6}>主力统计</Txt><Caret $color="#1a1a1a" $ml={9} /></Picker>
        <Values $w={827} $pl={12}>
          <Stat w={301} color={DEEP} label="当日买:" num="1122.28" unit="万" up dirColor={RED} />
          <Stat w={300} color="#139c43" label="当日卖:" num="2193.05" unit="万" dirColor={GREEN} />
          <Value $w={240} $color="#139c43"><Txt $size={34} $ls={0.7}>净买额:</Txt><Txt $size={34} $bold $ls={1} $ml={1}>-1070.</Txt></Value>
        </Values>
        <HeadTail $pl={7}><HelpIcon /></HeadTail>
      </IndHead>
      <MainChart />
    </Charts>
  );
}

/* ---------- bottom ---------- */

const BottomBar = styled.div`
  height: 144px;
  border-top: 1px solid #dcdcdc;
  display: grid;
  grid-template-columns: 263px 204px 205px 204px 204px;
`;
const IndexBox = styled.div`
  display: flex;
  align-items: center;
`;
const IndexLines = styled.div`
  width: 259px;
  height: 98px;
  display: flex;
  flex-direction: column;
  justify-content: space-between;
  padding-left: 30px;
  color: ${GREEN};
`;
const IndexRow = styled.div`
  height: 48px;
  display: flex;
  align-items: center;
`;
const Divider = styled.div`
  width: 2px;
  height: 46px;
  background: #ddd;
`;
const Action = styled.div<{ $color: string; $bg?: string }>`
  display: flex;
  flex-direction: column;
  align-items: center;
  padding-top: 19px;
  gap: 8px;
  color: ${(p) => p.$color};
  background: ${(p) => p.$bg ?? 'transparent'};
`;
const NavBar = styled.div`
  height: 120px;
  background: #f7f7f7;
  display: flex;
  align-items: center;
  justify-content: center;
  gap: 180px;
`;

function Bottom() {
  return (
    <>
      <BottomBar>
        <IndexBox>
          <IndexLines>
            <IndexRow><Txt $size={39} $bold $ls={-0.8} $pt={5}>968.88</Txt><Caret $color={INK} $up $ml={20} /></IndexRow>
            <IndexRow>
              <Clip $w={28} style={{ marginLeft: 54, paddingTop: 5 }}><Txt $size={31} $color="#333">房</Txt></Clip>
              <Txt $size={36} $bold $ml={4} $ls={0.8} $pt={1}>-1.50%</Txt>
            </IndexRow>
          </IndexLines>
          <Divider />
        </IndexBox>
        <Action $color={INK}>
          <svg width="64" height="64" viewBox="0 0 64 64">
            <path d="M9 8h33q13 1 13 14v34H9z" fill="none" stroke={INK} strokeWidth="4.500" strokeLinejoin="round" />
            <path d="M13 46q6-12 14-20l6 10 6-9-4-4 16-2-4 15-4-5-9 15-7-10q-7 4-14 10z" fill={INK} />
          </svg>
          <Txt $size={29}>盈利模式</Txt>
        </Action>
        <Action $color={INK}>
          <svg width="64" height="64" viewBox="0 0 64 64">
            <g fill="none" stroke={INK} strokeWidth="4.500" strokeLinejoin="round">
              <path d="M28 8v19H8v-9q0-10 10-10zM37 8h17q1 0 1 1v18H37zM8 37h20v19H9q-1 0-1-1zM36 37h19v9q0 10-10 10h-9z" />
            </g>
          </svg>
          <Txt $size={29}>更多功能</Txt>
        </Action>
        <Action $color={DEEP}>
          <svg width="64" height="64" viewBox="0 0 64 64">
            <rect x="7.500" y="8" width="48" height="48" rx="1" fill="none" stroke="#ec2f47" strokeWidth="4.500" />
            <path d="M31.500 18.500v27M18 32h27" stroke="#ec2f47" strokeWidth="4.500" />
          </svg>
          <Txt $size={29}>加自选</Txt>
        </Action>
        <Action $color="#fff" $bg={RED}>
          <svg width="64" height="64" viewBox="0 0 64 64">
            <path d="M32 4l25 14.500v27L32 60 7 45.500v-27z" fill="none" stroke="#fff" strokeWidth="4.200" strokeLinejoin="round" />
            <path d="M25 32l12-9M39 32l-12 9" stroke="#fff" strokeWidth="4.500" />
            <path d="M31 21l12 4-8 6zM33 44l-9-5 8-6z" fill="#fff" />
          </svg>
          <Txt $size={29}>交易</Txt>
        </Action>
      </BottomBar>
      <NavBar>
        <svg width="50" height="56" viewBox="0 0 50 56"><path d="M44 5v46L6 30q-2-2 0-4z" fill="none" stroke="#868686" strokeWidth="3.800" strokeLinejoin="round" /></svg>
        <svg width="50" height="50" viewBox="0 0 50 50"><circle cx="25" cy="25" r="21.500" fill="none" stroke="#868686" strokeWidth="4" /></svg>
        <svg width="50" height="50" viewBox="0 0 50 50"><rect x="5" y="5" width="39" height="39" rx="2" fill="none" stroke="#868686" strokeWidth="4" /></svg>
      </NavBar>
    </>
  );
}

export default function App() {
  return (
    <Screen>
      <Global />
      <StatusBar><LeftStatus /><RightStatus /></StatusBar>
      <Title />
      <QuotePanel />
      <Notices />
      <PeriodTabs />
      <ChartArea />
      <Bottom />
    </Screen>
  );
}
